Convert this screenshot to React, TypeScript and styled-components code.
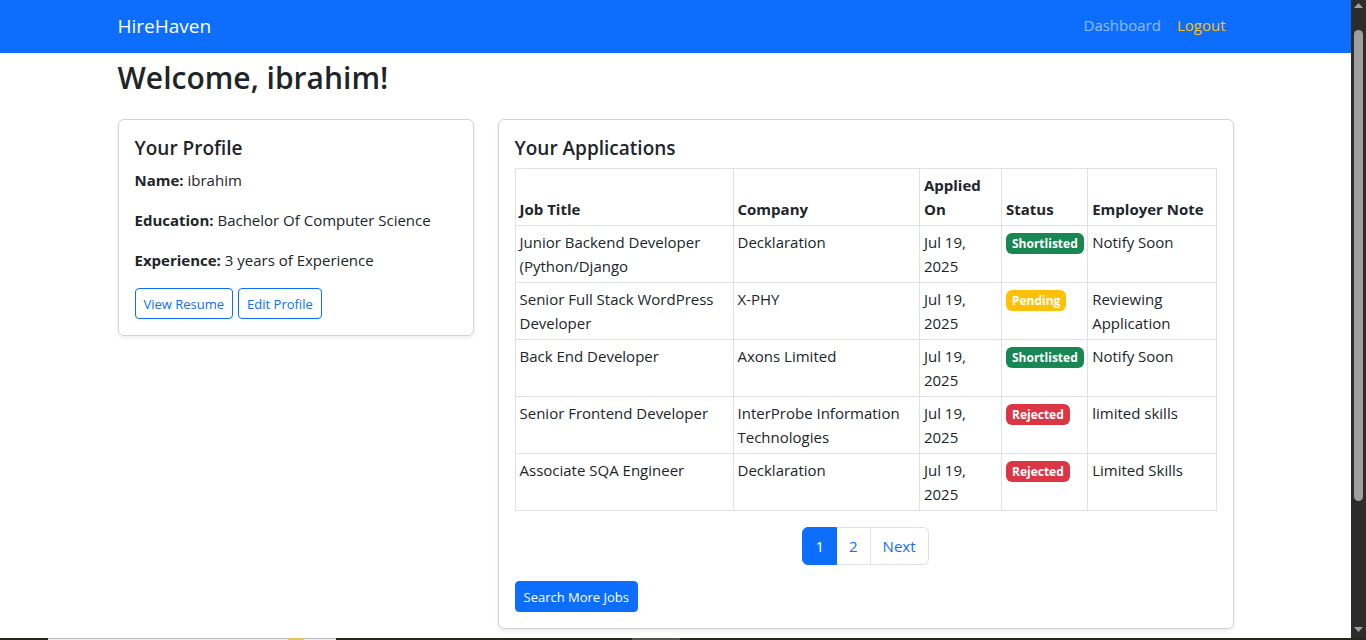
import React from "react";
import styled, { createGlobalStyle } from "styled-components";

const GlobalStyle = createGlobalStyle`
  *, *::before, *::after { box-sizing: border-box; }
  body {
    margin: 0;
    background: #fff;
    color: #212529;
    font-family: "Open Sans", "Noto Sans", sans-serif;
    font-size: 15px;
    line-height: 24px;
  }
`;

const Screen = styled.div`
  display: flex;
  flex-direction: column;
  min-height: 100vh;
`;

const Browser = styled.div`
  display: flex;
  flex: 1;
`;

const Page = styled.div`
  flex: 1;
  min-width: 0;
  padding-bottom: 9px;
`;

const Container = styled.div`
  width: 100%;
  max-width: 1140px;
  margin: 0 auto;
  padding: 0 12px;
`;

const Navbar = styled.header`
  background: #0d6efd;
  padding: 11px 0 12px;
`;

const NavRow = styled(Container)`
  display: flex;
  align-items: center;
  justify-content: space-between;
`;

const Brand = styled.a`
  color: #fff;
  font-size: 19px;
  line-height: 30px;
  text-decoration: none;
`;

const NavLinks = styled.nav`
  display: flex;
  gap: 16px;
  padding: 0 8px 2px 0;
`;

const NavLink = styled.a<{ $accent?: boolean }>`
  color: ${(p) => (p.$accent ? "#ffc107" : "rgba(255, 255, 255, 0.55)")};
  text-decoration: none;
`;

const Welcome = styled.h1`
  margin: 6px 0 22px;
  font-size: 30px;
  font-weight: 600;
  line-height: 38px;
`;

const Columns = styled.div`
  display: grid;
  grid-template-columns: minmax(0, 356fr) minmax(0, 736fr);
  align-items: start;
  gap: 24px;
`;

const Card = styled.section`
  padding: 16px;
  border: 1px solid #d2d3d4;
  border-radius: 6px;
  background: #fff;
  box-shadow: 0 2px 4px rgba(0, 0, 0, 0.075);
`;

const CardTitle = styled.h2`
  margin: 0 0 8px;
  font-size: 19px;
  font-weight: 600;
  line-height: 24px;
`;

const Field = styled.p`
  margin: 0 0 16px;
`;

const ButtonRow = styled.div`
  display: flex;
  gap: 5px;
`;

const Button = styled.button<{ $solid?: boolean }>`
  padding: 5px 8px 3px;
  border: 1px solid #0d6efd;
  border-radius: 4px;
  background: ${(p) => (p.$solid ? "#0d6efd" : "transparent")};
  color: ${(p) => (p.$solid ? "#fff" : "#0d6efd")};
  font: inherit;
  font-size: 13px;
  line-height: 21px;
  cursor: pointer;
`;

const Table = styled.table`
  width: 100%;
  margin-bottom: 16px;
  border-collapse: collapse;
  table-layout: fixed;
`;

const Col = styled.col<{ $width?: string }>`
  width: ${(p) => p.$width ?? "auto"};
`;

const HeadCell = styled.th`
  padding: 4px;
  border: 1px solid #dee2e6;
  text-align: left;
  vertical-align: bottom;
`;

const Cell = styled.td`
  padding: 4px;
  border: 1px solid #dee2e6;
  vertical-align: top;
`;

type Status = "Shortlisted" | "Pending" | "Rejected";

const statusColor: Record<Status, string> = {
  Shortlisted: "#198754",
  Pending: "#ffc107",
  Rejected: "#dc3545",
};

const Badge = styled.span<{ $status: Status }>`
  display: block;
  width: fit-content;
  margin-top: 3px;
  padding: 4px 6px;
  border-radius: 6px;
  background: ${(p) => statusColor[p.$status]};
  color: #fff;
  font-size: 12px;
  font-weight: 700;
  line-height: 13px;
`;

const Pagination = styled.nav`
  display: flex;
  justify-content: center;
  margin-bottom: 16px;
`;

const PageLink = styled.a<{ $active?: boolean }>`
  padding: 6px 12px;
  border: 1px solid ${(p) => (p.$active ? "#0d6efd" : "#dee2e6")};
  background: ${(p) => (p.$active ? "#0d6efd" : "#fff")};
  color: ${(p) => (p.$active ? "#fff" : "#0d6efd")};
  text-decoration: none;

  & + & { border-left-width: 0; }
  &:first-child { border-radius: 6px 0 0 6px; }
  &:last-child { border-radius: 0 6px 6px 0; }
`;

const ScrollTrack = styled.aside`
  display: flex;
  flex-direction: column;
  align-items: center;
  width: 15px;
  padding: 3px 0 6px;
  background: #2c2c2c;
`;

const ScrollThumb = styled.div`
  flex: 470;
  width: 9px;
  margin-top: 22px;
  border-radius: 5px;
  background: #9f9f9f;
`;

const ScrollRest = styled.div`
  flex: 126;
`;

const Arrow = styled.svg`
  display: block;
  width: 9px;
  height: 5px;
  fill: #9f9f9f;
`;

const Taskbar = styled.footer`
  display: grid;
  grid-template-columns: 48px 288px 296px 48px 1fr;
  height: 2px;
  background: #25281b;
`;

const TaskSearch = styled.div`
  grid-column: 2;
  display: flex;
  justify-content: flex-end;
  padding-right: 32px;
  border-top: 1px solid #bdbdb9;
  background: #f2f2f2;
`;

const TaskGlow = styled.div`
  width: 16px;
  height: 2px;
  margin-top: -1px;
  border-radius: 8px 8px 0 0;
  background: #e8c25a;
`;

const TaskActive = styled.div`
  grid-column: 4;
  background: #51544a;
`;

interface Application {
  title: string;
  company: string;
  applied: string;
  status: Status;
  note: string;
}

const applications: Application[] = [
  { title: "Junior Backend Developer (Python/Django", company: "Decklaration", applied: "Jul 19, 2025", status: "Shortlisted", note: "Notify Soon" },
  { title: "Senior Full Stack WordPress Developer", company: "X-PHY", applied: "Jul 19, 2025", status: "Pending", note: "Reviewing Application" },
  { title: "Back End Developer", company: "Axons Limited", applied: "Jul 19, 2025", status: "Shortlisted", note: "Notify Soon" },
  { title: "Senior Frontend Developer", company: "InterProbe Information Technologies", applied: "Jul 19, 2025", status: "Rejected", note: "limited skills" },
  { title: "Associate SQA Engineer", company: "Decklaration", applied: "Jul 19, 2025", status: "Rejected", note: "Limited Skills" },
];

export default function App() {
  return (
    <Screen>
      <GlobalStyle />
      <Browser>
        <Page>
          <Navbar>
            <NavRow>
              <Brand href="#">HireHaven</Brand>
              <NavLinks>
                <NavLink href="#">Dashboard</NavLink>
                <NavLink href="#" $accent>Logout</NavLink>
              </NavLinks>
            </NavRow>
          </Navbar>
          <Container as="main">
            <Welcome>Welcome, ibrahim!</Welcome>
            <Columns>
              <Card>
                <CardTitle>Your Profile</CardTitle>
                <Field><strong>Name:</strong> ibrahim</Field>
                <Field><strong>Education:</strong> Bachelor Of Computer Science</Field>
                <Field><strong>Experience:</strong> 3 years of Experience</Field>
                <ButtonRow>
                  <Button type="button">View Resume</Button>
                  <Button type="button">Edit Profile</Button>
                </ButtonRow>
              </Card>
              <Card>
                <CardTitle>Your Applications</CardTitle>
                <Table>
                  <colgroup>
                    <Col $width="31.1%" />
                    <Col $width="26.6%" />
                    <Col $width="11.7%" />
                    <Col $width="12.3%" />
                    <Col />
                  </colgroup>
                  <thead>
                    <tr>
                      <HeadCell>Job Title</HeadCell>
                      <HeadCell>Company</HeadCell>
                      <HeadCell>Applied On</HeadCell>
                      <HeadCell>Status</HeadCell>
                      <HeadCell>Employer Note</HeadCell>
                    </tr>
                  </thead>
                  <tbody>
                    {applications.map((a) => (
                      <tr key={a.title}>
                        <Cell>{a.title}</Cell>
                        <Cell>{a.company}</Cell>
                        <Cell>{a.applied}</Cell>
                        <Cell><Badge $status={a.status}>{a.status}</Badge></Cell>
                        <Cell>{a.note}</Cell>
                      </tr>
                    ))}
                  </tbody>
                </Table>
                <Pagination aria-label="Pages">
                  <PageLink href="#" $active aria-current="page">1</PageLink>
                  <PageLink href="#">2</PageLink>
                  <PageLink href="#">Next</PageLink>
                </Pagination>
                <ButtonRow>
                  <Button type="button" $solid>Search More Jobs</Button>
                </ButtonRow>
              </Card>
            </Columns>
          </Container>
        </Page>
        <ScrollTrack aria-hidden="true">
          <Arrow viewBox="0 0 9 5"><path d="M4.5 0 9 5H0z" /></Arrow>
          <ScrollThumb />
          <ScrollRest />
          <Arrow viewBox="0 0 9 5"><path d="M0 0h9L4.5 5z" /></Arrow>
        </ScrollTrack>
      </Browser>
      <Taskbar>
        <TaskSearch><TaskGlow /></TaskSearch>
        <TaskActive />
      </Taskbar>
    </Screen>
  );
}
